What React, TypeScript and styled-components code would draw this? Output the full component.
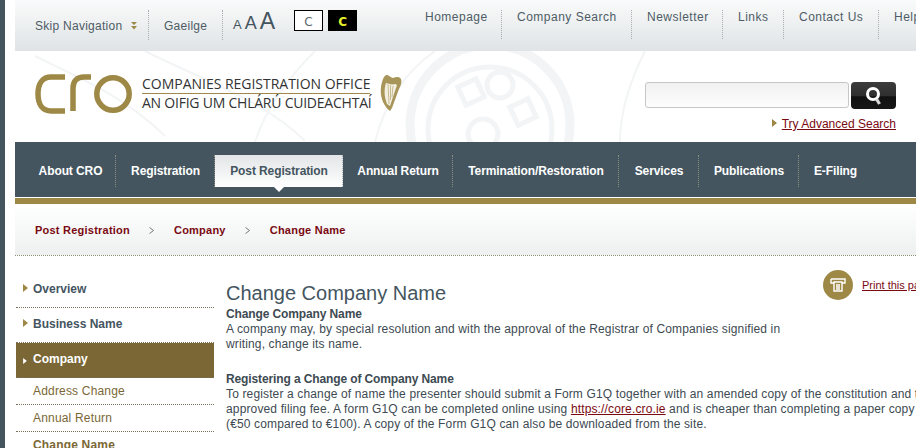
import React from "react";
import styled, { createGlobalStyle } from "styled-components";

const Global = createGlobalStyle`
  html, body { margin: 0; padding: 0; background: #fff; }
  body { width: 916px; height: 448px; overflow: hidden; font-family: "Liberation Sans", Arial, sans-serif; }
`;

const Page = styled.div`
  width: 916px; height: 448px; overflow: hidden; display: flex; background: #fff;
`;
const Edge = styled.div`
  width: 5px; flex: none; background: #44555f;
`;
const Shell = styled.div`
  width: 901px; margin-left: 10px; flex: none; display: flex; flex-direction: column; position: relative; overflow: hidden;
`;
const TopBar = styled.div`
  height: 51px; flex: none; display: flex; position: relative;
  background: linear-gradient(#fafbfb, #dfe3e5);
`;
const TopLeft = styled.div`
  display: flex; align-items: flex-start; padding: 10px 0 0 20px;
`;
const SkipItem = styled.a`
  height: 30px; line-height: 32px; font-size: 12px; letter-spacing: .27px; color: #4d5c66; white-space: nowrap;
  display: flex; gap: 9px; border-right: 1px dotted #a7aeb1; width: 114px; box-sizing: border-box; flex: none;
`;
const Gaelic = styled.a`
  height: 30px; line-height: 32px; font-size: 12px; letter-spacing: .27px; color: #4d5c66;
  padding-left: 15px; border-right: 1px dotted #a7aeb1; width: 74px; box-sizing: border-box; flex: none;
`;
const SkipMark = styled.svg`
  width: 6px; height: 8px; margin-top: 12px;
`;
const SizeRow = styled.div`
  display: flex; align-items: baseline; gap: 3px; margin-left: 10px; height: 23px; color: #44555f; line-height: 23px; flex: none;
`;
const SizeA = styled.span<{ $s: number }>`
  font-size: ${(p) => p.$s}px;
`;
const ContrastRow = styled.div`
  display: flex; gap: 5px; margin-left: 19px;
`;
const Contrast = styled.div<{ $dark?: boolean }>`
  width: 29px; height: 21px; box-sizing: border-box; border: 1px solid #000; text-align: center;
  font-size: 12px; line-height: 23px; font-family: "DejaVu Sans", sans-serif;
  background: ${(p) => (p.$dark ? "#000" : "#fff")};
  color: ${(p) => (p.$dark ? "#e6f02a" : "#5a666e")};
  font-weight: ${(p) => (p.$dark ? 700 : 400)};
`;
const TopRight = styled.nav`
  display: flex; align-items: flex-start; padding-top: 10px; position: absolute; left: 395px; top: 0;
`;
const TopLink = styled.a<{ $w: number; $last?: boolean }>`
  width: ${(p) => p.$w}px; box-sizing: border-box; height: 29px; line-height: 14px; font-size: 12px; letter-spacing: .5px;
  color: #4d5c66; white-space: nowrap; flex: none;
  padding-left: 15px;
  border-right: ${(p) => (p.$last ? "none" : "1px dotted #a7aeb1")};
`;
const Header = styled.div`
  height: 91px; flex: none; display: flex; justify-content: space-between; position: relative; overflow: hidden;
`;
const Watermark = styled.svg`
  position: absolute; left: 0; top: 0; width: 901px; height: 91px;
`;
const Logo = styled.div`
  position: relative; display: flex; align-items: flex-start; padding: 23px 0 0 20px;
`;
const LogoMark = styled.svg`
  width: 97px; height: 40px; flex: none; 
`;
const LogoText = styled.div`
  margin-left: 10px; width: 228px; font-family: "Open Sans", sans-serif; color: #333; font-size: 14px; line-height: 16px; white-space: nowrap; padding-top: 1px;
`;
const LogoLine = styled.div`
  padding-bottom: 1px; border-bottom: 1px solid #a08a4a; letter-spacing: -.02px; margin-top: 1px;
`;
const LogoLine2 = styled.div`
  letter-spacing: -.23px; margin-top: 1px;
`;
const Harp = styled.svg`
  width: 24px; height: 38px; margin-left: 9px; flex: none;
`;
const SearchArea = styled.div`
  position: relative; padding: 31px 20px 0 0; display: flex; flex-direction: column; align-items: flex-end;
`;
const SearchRow = styled.div`
  display: flex; gap: 2px;
`;
const SearchInput = styled.div`
  width: 204px; height: 26px; box-sizing: border-box; border: 1px solid #c5c8c8; border-radius: 3px;
  background: linear-gradient(#f1f1f1, #fdfdfd);
`;
const SearchButton = styled.div`
  width: 45px; height: 27px; border-radius: 4px; display: flex; align-items: center; justify-content: center;
  background: linear-gradient(#3c3c3c 0, #2f2f2f 50%, #111 55%, #161616 100%);
`;
const AdvLink = styled.a`
  display: flex; align-items: center; gap: 5px; margin-top: 8px; font-size: 12px; color: #7a0a12; letter-spacing: 0;
  text-decoration: underline; line-height: 14px;
`;
const Tri = styled.svg<{ $small?: boolean }>`
  width: ${(p) => (p.$small ? 4 : 5)}px; height: ${(p) => (p.$small ? 6 : 8)}px; flex: none;
  margin: ${(p) => (p.$small ? "3px 1px 0 0" : "-3px 0 0 0")};
`;
const MainNav = styled.nav`
  height: 55px; flex: none; background: #44555f; display: flex; padding: 13px 0 0 10px; box-sizing: border-box; position: relative;
`;
const NavItem = styled.a<{ $w: number; $active?: boolean; $noline?: boolean }>`
  width: ${(p) => p.$w}px; flex: none; box-sizing: border-box; height: 32px; line-height: 32px; text-align: center;
  font-size: 12px; font-weight: 700; white-space: nowrap; position: relative; letter-spacing: -.1px; padding-left: 1px;
  color: ${(p) => (p.$active ? "#44555f" : "#fff")};
  background: ${(p) => (p.$active ? "linear-gradient(#e2e5e6, #fff)" : "transparent")};
  border-right: ${(p) => (p.$noline ? "none" : p.$active ? "1px dotted #aeb4b6" : "1px dotted #8b8f7c")};
  &::after {
    content: ${(p) => (p.$active ? '""' : "none")};
    position: absolute; left: 50%; bottom: -5px; margin-left: -5px;
    border-left: 5px solid transparent; border-right: 5px solid transparent; border-top: 5px solid #fff;
  }
`;
const GoldRule = styled.div`
  height: 7px; flex: none; border-top: 1px solid #fff; background: #9e8846; box-sizing: border-box; margin-top: 0;
`;
const Crumbs = styled.div`
  height: 52px; flex: none; box-sizing: border-box; display: flex; align-items: center; padding: 0 0 0 20px;
  background: linear-gradient(#fff, #eef0f0); border-bottom: 1px dotted #8c8c72;
  font-size: 11px; font-weight: 700; color: #7a0a12; letter-spacing: .23px;
`;
const CrumbSep = styled.svg`
  width: 5px; height: 7px; margin: 2px 20px 0 19px;
`;
const Body = styled.div`
  display: flex; flex: 1; min-height: 0;
`;
const Side = styled.aside`
  width: 198px; flex: none; margin: 17px 0 0 1px;
`;
const SideTop = styled.div<{ $active?: boolean }>`
  height: 35px; box-sizing: border-box; display: flex; align-items: center; gap: 5px; padding: 0 0 2px 7px;
  font-size: 12px; font-weight: 700;
  color: ${(p) => (p.$active ? "#fff" : "#44555f")};
  background: ${(p) => (p.$active ? "#7a6735" : "transparent")};
  border-bottom: 1px dotted #7a7258;
`;
const SideSub = styled.div<{ $current?: boolean }>`
  height: 27px; box-sizing: border-box; padding: 7px 0 0 17px; line-height: 13px; font-size: 12px; color: #7a6735; letter-spacing: .18px;
  font-weight: ${(p) => (p.$current ? 700 : 400)};
  border-bottom: ${(p) => (p.$current ? "none" : "1px dotted #7a7258")};
`;
const Main = styled.main`
  margin-left: 12px; flex: 1; min-width: 0; padding-top: 14px;
`;
const Print = styled.div`
  float: right; width: 93px; display: flex; align-items: center; gap: 9px; overflow: hidden;
`;
const PrintBadge = styled.div`
  width: 30px; height: 30px; border-radius: 50%; background: #9e8846; flex: none; display: flex; align-items: center; justify-content: center;
`;
const PrintLink = styled.a`
  font-size: 11px; color: #7a0a12; text-decoration: underline; white-space: nowrap; 
`;
const Title = styled.h1`
  margin: 0 0 3px; font-size: 20px; line-height: 21px; padding-top: 13px; font-weight: 400; color: #44555f; white-space: nowrap;
`;
const Section = styled.div`
  clear: both; font-size: 12px; line-height: 14.8px; color: #3d4a52; white-space: nowrap; letter-spacing: .14px; margin-bottom: 21px;
`;
const Lead = styled.strong`
  display: block; letter-spacing: -.12px;
`;
const InlineLink = styled.a`
  color: #7a0a12; text-decoration: underline;
`;

const Triangle = ({ c = "#9e8846", small }: { c?: string; small?: boolean }) => (
  <Tri $small={small} viewBox="0 0 5 8"><path d="M0 0l5 4-5 4z" fill={c} /></Tri>
);

export default function App() {
  return (
    <Page>
      <Global />
      <Edge />
      <Shell>
        <TopBar>
          <TopLeft>
            <SkipItem>
              Skip Navigation
              <SkipMark viewBox="0 0 6 8"><path d="M0 0h6L3 3zM0 4h6L3 7.5z" fill="#9e8846" /></SkipMark>
            </SkipItem>
            <Gaelic>Gaeilge</Gaelic>
            <SizeRow>
              <SizeA $s={13}>A</SizeA>
              <SizeA $s={18}>A</SizeA>
              <SizeA $s={23}>A</SizeA>
            </SizeRow>
            <ContrastRow>
              <Contrast>C</Contrast>
              <Contrast $dark>C</Contrast>
            </ContrastRow>
          </TopLeft>
          <TopRight>
            <TopLink $w={92}>Homepage</TopLink>
            <TopLink $w={130}>Company Search</TopLink>
            <TopLink $w={91}>Newsletter</TopLink>
            <TopLink $w={61}>Links</TopLink>
            <TopLink $w={95}>Contact Us</TopLink>
            <TopLink $w={60} $last>Help</TopLink>
          </TopRight>
        </TopBar>
        <Header>
          <Watermark viewBox="0 0 901 91" fill="none" stroke="#f2f4f5" strokeWidth="5">
            <circle cx="475" cy="74" r="80" strokeWidth="9" />
            <circle cx="475" cy="78" r="62" />
            <circle cx="485" cy="34" r="13" />
            <rect x="446" y="31" width="20" height="20" transform="rotate(-25 456 41)" />
            <rect x="498" y="51" width="20" height="20" transform="rotate(-25 508 61)" />
            <circle cx="468" cy="83" r="15" />
            <path d="M20 5c40 20 90 40 130 80M130 0c60 30 120 50 160 90M300 0c-30 30-50 60-60 91M360 91c10-40 30-70 60-91" strokeWidth="2" />
            <path d="M630 0c-15 30-25 60-25 91" strokeWidth="2" />
          </Watermark>
          <Logo>
            <LogoMark viewBox="0 0 97 40" fill="none" stroke="#9e8846" strokeWidth="5.5">
              <path d="M30 3H16C8 3 3 9 3 20s5 17 13 17h14" />
              <path d="M38 37V14c0-7 4-11 11-11h7" />
              <circle cx="78" cy="20" r="16.2" />
            </LogoMark>
            <LogoText>
              <LogoLine>COMPANIES REGISTRATION OFFICE</LogoLine>
              <LogoLine2>AN OIFIG UM CHLÁRÚ CUIDEACHTAÍ</LogoLine2>
            </LogoText>
            <Harp viewBox="0 0 24 38" fill="none">
              <path d="M4 5c-3 8-3 16 0 23 2 4 4 7 7 9l2-3 7-19c2-4 3-7 2-10-2-3-5-2-8-1-2 0-4-3-6-3-2 0-3 2-4 4z" fill="#a8955a" />
              <path d="M7 9c-2 6-2 13 1 21l3 2 6-18c1-2 1-3 0-4-2 0-4 1-6 0-1 0-3-1-4-1z" fill="#f3efe0" />
              <path d="M9 10l1 20M11.500 11v15M14 12l-1 11" stroke="#b5a56f" strokeWidth=".7" />
            </Harp>
          </Logo>
          <SearchArea>
            <SearchRow>
              <SearchInput />
              <SearchButton>
                <svg width="18" height="20" viewBox="0 0 18 20" fill="none" stroke="#fff">
                  <circle cx="8" cy="8" r="5.5" strokeWidth="3" />
                  <path d="M11.500 13l3 5" strokeWidth="3.200" stroke="#d8d8d8" />
                </svg>
              </SearchButton>
            </SearchRow>
            <AdvLink><Triangle />Try Advanced Search</AdvLink>
          </SearchArea>
        </Header>
        <MainNav>
          <NavItem $w={91}>About CRO</NavItem>
          <NavItem $w={99}>Registration</NavItem>
          <NavItem $w={128} $active>Post Registration</NavItem>
          <NavItem $w={110}>Annual Return</NavItem>
          <NavItem $w={166}>Termination/Restoration</NavItem>
          <NavItem $w={80}>Services</NavItem>
          <NavItem $w={100}>Publications</NavItem>
          <NavItem $w={72} $noline>E-Filing</NavItem>
        </MainNav>
        <GoldRule />
        <Crumbs>
          Post Registration
          <CrumbSep viewBox="0 0 5 7" fill="none" stroke="#777"><path d="M.5.5l4 3-4 3" /></CrumbSep>
          Company
          <CrumbSep viewBox="0 0 5 7" fill="none" stroke="#777"><path d="M.5.5l4 3-4 3" /></CrumbSep>
          Change Name
        </Crumbs>
        <Body>
          <Side>
            <SideTop><Triangle />Overview</SideTop>
            <SideTop><Triangle />Business Name</SideTop>
            <SideTop $active><Triangle c="#fff" small />Company</SideTop>
            <SideSub>Address Change</SideSub>
            <SideSub>Annual Return</SideSub>
            <SideSub $current>Change Name</SideSub>
          </Side>
          <Main>
            <Print>
              <PrintBadge>
                <svg width="16" height="14" viewBox="0 0 16 14" fill="none" stroke="#fff" strokeWidth="1.400">
                  <path d="M1 1h14v4h-3M1 1v4h3" />
                  <path d="M4 4h8v9H4zM6 7h4M6 9h4M6 11h4" />
                </svg>
              </PrintBadge>
              <PrintLink>Print this page</PrintLink>
            </Print>
            <Title>Change Company Name</Title>
            <Section>
              <Lead>Change Company Name</Lead>
              A company may, by special resolution and with the approval of the Registrar of Companies signified in<br />
              writing, change its name.
            </Section>
            <Section>
              <Lead>Registering a Change of Company Name</Lead>
              To register a change of name the presenter should submit a Form G1Q together with an amended copy of the constitution and the<br />
              approved filing fee. A form G1Q can be completed online using <InlineLink>https://core.cro.ie</InlineLink> and is cheaper than completing a paper copy of the form<br />
              (€50 compared to €100). A copy of the Form G1Q can also be downloaded from the site.
            </Section>
          </Main>
        </Body>
      </Shell>
    </Page>
  );
}
